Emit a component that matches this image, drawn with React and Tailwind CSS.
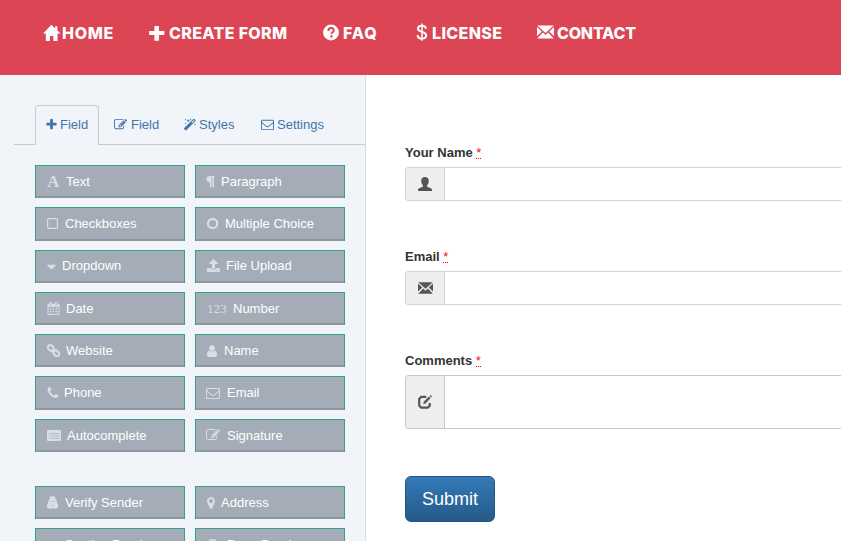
import React from "react";
import { FaUpload, FaCaretDown } from "react-icons/fa";

const PATHS = {
  edit: "M888 1184l116-116-152-152-116 116v56h96v96h56zm440-720q-16-16-33 1l-350 350q-17 17-1 33t33-1l350-350q17-17 1-33zm80 594v190q0 119-84.5 203.5t-203.5 84.5h-832q-119 0-203.5-84.5t-84.5-203.5v-832q0-119 84.5-203.5t203.5-84.5h832q63 0 117 25 15 7 18 23 3 17-9 29l-49 49q-14 14-32 8-23-6-45-6h-832q-66 0-113 47t-47 113v832q0 66 47 113t113 47h832q66 0 113-47t47-113v-126q0-13 9-22l64-64q15-15 35-7t20 29zm-96-738l288 288-672 672h-288v-288zm444 132l-92 92-288-288 92-92q28-28 68-28t68 28l152 152q28 28 28 68t-28 68z",
  plus: "M1600 736v192q0 40-28 68t-68 28h-416v416q0 40-28 68t-68 28h-192q-40 0-68-28t-28-68v-416h-416q-40 0-68-28t-28-68v-192q0-40 28-68t68-28h416v-416q0-40 28-68t68-28h192q40 0 68 28t28 68v416h416q40 0 68 28t28 68z",
  user: "M1536 1399q0 109-62.5 187t-150.5 78h-854q-88 0-150.5-78t-62.5-187q0-85 8.5-160.5t31.5-152 58.5-131 94-89 134.5-34.5q131 128 313 128t313-128q76 0 134.5 34.5t94 89 58.5 131 31.5 152 8.5 160.5zm-256-887q0 159-112.5 271.5t-271.5 112.5-271.5-112.5-112.5-271.5 112.5-271.5 271.5-112.5 271.5 112.5 112.5 271.5z",
  calendar: "M192 1664h288v-288h-288v288zm352 0h320v-288h-320v288zm-352-352h288v-320h-288v320zm352 0h320v-320h-320v320zm-352-384h288v-288h-288v288zm736 736h320v-288h-320v288zm-384-736h320v-288h-320v288zm768 736h288v-288h-288v288zm-384-352h320v-320h-320v320zm-352-864v-288q0-13-9.5-22.5t-22.5-9.5h-64q-13 0-22.5 9.5t-9.5 22.5v288q0 13 9.5 22.5t22.5 9.5h64q13 0 22.5-9.5t9.5-22.5zm736 864h288v-320h-288v320zm-384-384h320v-288h-320v288zm384 0h288v-288h-288v288zm32-480v-288q0-13-9.5-22.5t-22.5-9.5h-64q-13 0-22.5 9.5t-9.5 22.5v288q0 13 9.5 22.5t22.5 9.5h64q13 0 22.5-9.5t9.5-22.5zm384-64v1280q0 52-38 90t-90 38h-1408q-52 0-90-38t-38-90v-1280q0-52 38-90t90-38h128v-96q0-66 47-113t113-47h64q66 0 113 47t47 113v96h384v-96q0-66 47-113t113-47h64q66 0 113 47t47 113v96h128q52 0 90 38t38 90z",
  envelope: "M1664 1504v-768q-32 36-69 66-268 206-426 338-51 43-83 67t-86.5 48.5-102.5 24.5h-2q-48 0-102.5-24.5t-86.5-48.5-83-67q-158-132-426-338-37-30-69-66v768q0 13 9.5 22.5t22.5 9.5h1472q13 0 22.5-9.5t9.5-22.5zm0-1051v-24.5l-.5-13-3-12.5-5.5-9-9-7.5-14-2.5h-1472q-13 0-22.5 9.5t-9.5 22.5q0 168 147 284 193 152 401 317 6 5 35 29.5t46 37.5 44.5 31.5 50.5 27.5 43 9h2q20 0 43-9t50.5-27.5 44.5-31.5 46-37.5 35-29.5q208-165 401-317 54-43 100.5-115.5t46.5-131.5zm128-37v1088q0 66-47 113t-113 47h-1472q-66 0-113-47t-47-113v-1088q0-66 47-113t113-47h1472q66 0 113 47t47 113z",
  marker: "M1152 640q0-106-75-181t-181-75-181 75-75 181 75 181 181 75 181-75 75-181zm256 0q0 109-33 179l-364 774q-16 33-47.5 52t-67.5 19-67.5-19-46.5-52l-365-774q-33-70-33-179 0-212 150-362t362-150 362 150 150 362z",
  phone: "M1600 1240q0 27-10 70.5t-21 68.5q-21 50-122 106-94 51-186 51-27 0-53-3.5t-57.5-12.5-47-14.5-55.5-20.5-49-18q-98-35-175-83-127-79-264-216t-216-264q-48-77-83-175-3-9-18-49t-20.5-55.5-14.5-47-12.5-57.5-3.5-53q0-92 51-186 56-101 106-122 25-11 68.5-21t70.5-10q14 0 21 3 18 6 53 76 11 19 30 54t35 63.5 31 53.5q3 4 17.5 25t21.5 35.5 7 28.5q0 20-28.5 50t-62 55-62 53-28.5 46q0 9 5 22.5t8.5 20.5 14 24 11.5 19q76 137 174 235t235 174q2 1 19 11.5t24 14 20.5 8.5 22.5 5q18 0 46-28.5t53-62 55-62 50-28.5q14 0 28.5 7t35.5 21.5 25 17.5q25 15 53.5 31t63.5 35 54 30q70 35 76 53 3 7 3 21z",
};

const Fa = ({ name, className = "size-[13px]" }) => (
  <svg viewBox="0 0 1792 1792" fill="currentColor" className={className}>
    <path d={PATHS[name]} />
  </svg>
);

const Wand = () => (
  <svg viewBox="0 0 13 13" className="-ml-px mr-[3px] size-[13px]" fill="currentColor">
    <path fillRule="evenodd" d="M10.300 1q.5-.5 1 0l1.100 1.100q.5.500 0 1L3.300 12.200q-.5.500-1 0l-1.100-1.100q-.5-.5 0-1zM10.700 2.100L8.500 4.300l.7.700 2.200-2.200z" />
    <path d="M2.600.6l.3.800.8.300-.8.300-.3.800-.3-.8-.8-.3.800-.3zM5.300 1l.5 1.300 1.300.5-1.300.500-.5 1.300-.5-1.300-1.300-.5 1.300-.5zM7.800.2l.3.800.8.300-.8.300-.3.800-.3-.8-.8-.3.800-.3zM12 5.400l.3.800.8.300-.8.300-.3.800-.3-.8-.8-.3.800-.3zM2.600 4.400l.3.800.8.300-.8.300-.3.800-.3-.8-.8-.3.800-.3z" />
  </svg>
);
const Square = () => (
  <svg viewBox="0 0 13 13" className="size-[13px]" fill="none" stroke="currentColor" strokeWidth="1.2">
    <rect x="0.6" y="1.6" width="9.8" height="9.8" rx="1.4" />
  </svg>
);
const Circle = () => (
  <svg viewBox="0 0 13 13" className="size-[13px]" fill="none" stroke="currentColor" strokeWidth="2.200">
    <circle cx="5.6" cy="6.5" r="4.7" />
  </svg>
);
const Chain = () => (
  <svg viewBox="0 0 13 13" className="size-[13px]" fill="none" stroke="currentColor" strokeWidth="2.100">
    <rect x="0.700" y="1.600" width="6.200" height="4.700" rx="2.300" transform="rotate(45 3.800 3.900)" />
    <rect x="6.200" y="6.900" width="6.200" height="4.700" rx="2.300" transform="rotate(45 9.300 9.200)" />
    <path d="M5 5.200l3 3" />
  </svg>
);
const Card = () => (
  <svg viewBox="0 0 14 13" className="h-[13px] w-[14px]" fill="currentColor">
    <path fillRule="evenodd" d="M1 1h12q1 0 1 1v9q0 1-1 1H1q-1 0-1-1V2q0-1 1-1zM1.600 4.300v.800h1.200v-.8zm2.200 0v.8h8.600v-.8zM1.600 6.500v.8h1.200v-.8zm2.200 0v.8h8.600v-.8zM1.600 8.700v.8h1.200v-.8zm2.200 0v.8h8.600v-.8z" />
  </svg>
);
const Secret = () => (
  <svg viewBox="0 0 12 13" className="h-[13px] w-[12px]" fill="currentColor">
    <path fillRule="evenodd" d="M2.900 1Q3.300.2 4.200.3l1.300.3L6.800.3Q7.700.2 8.100 1l.6 2.400 1.300.6-.4.600.2 2Q11.100 7.400 11.100 10.200q0 2.400-1.600 2.400H1.600Q0 12.600 0 10.200 0 7.400 1.400 6.600l.1-2L1.100 4l1.300-.6zM3.300 5.300v.7h1.600v-.7zm2.800 0v.7h1.600v-.7zM5 8.400l.2 2.200h.6L6 8.400z" />
  </svg>
);
const Pilcrow = () => (
  <svg viewBox="0 0 9 13" className="-ml-px h-[13px] w-[9px]" fill="currentColor">
    <path d="M3.700 1H8.600v1.100H7.900v10.200H6.300V2.100H5.500v10.200H3.900V7.400Q.5 7 .5 4.200.5 1 3.700 1z" />
  </svg>
);
const Copy = () => (
  <svg viewBox="0 0 13 13" className="size-[13px]" fill="none" stroke="currentColor" strokeWidth="1.300">
    <path d="M1 3.500L3.500 1H8v3M1 3.500V9h4M3.500 1v2.500H1M5 6.500L7.500 4H12v8H5zM7.500 4v2.500H5" />
  </svg>
);

const Home = () => (
  <svg viewBox="0 0 18 18" className="-mt-px size-[18px]" fill="white">
    <path d="M8.500 .8L0 9.400h2.800V17h4.100v-5h3.400v5h4.200V9.400H17.500L14.300 6.200V2.200h-2.200v2.200z" />
  </svg>
);
const NavPlus = () => (
  <svg viewBox="0 0 16 18" className="-mt-px h-[18px] w-4" fill="white">
    <path d="M5.800 2h3.800q.4 0 .4.400v4.500h4.900q.5 0 .5.400v3.300q0 .4-.5.400H10v5.300q0 .5-.4.500H5.800q-.4 0-.4-.5V11H.6q-.5 0-.5-.4V7.300q0-.4.5-.4h4.800V2.400q0-.4.4-.4z" />
  </svg>
);
const Question = () => (
  <svg viewBox="0 0 16 18" className="h-[18px] w-4">
    <circle cx="8" cy="8.500" r="7.900" fill="white" />
    <path d="M5.300 6.900C5.300 4.800 6.400 4 8 4s2.800 1 2.800 2.400c0 1.900-2.300 1.900-2.300 3.600" fill="none" stroke="#dc4553" strokeWidth="1.900" />
    <rect x="7.300" y="11.300" width="2.300" height="2.200" fill="#dc4553" />
  </svg>
);
const Dollar = () => (
  <svg viewBox="0 0 12 20" className="h-5 w-3" fill="none" stroke="white">
    <path d="M10 5.600C9.700 3.900 8.300 2.800 6 2.800S2 3.900 2 5.700c0 4 8.200 2.300 8.200 6.600 0 2-1.700 3.300-4.200 3.300s-4.300-1.400-4.400-3.500" strokeWidth="2" />
    <path d="M6 .6v17.200" strokeWidth="1.500" />
  </svg>
);
const GlyphMail = ({ className }) => (
  <svg viewBox="0 0 18 14" className={className} fill="currentColor">
    <path d="M.3 0H17.700L9 8zM0 1.700L5.100 6.500 0 11.300zM18 1.700v9.600L12.900 6.500zM6.200 7.600L9 10.200l2.800-2.600L17.800 14H.2z" />
  </svg>
);
const GlyphUser = () => (
  <svg viewBox="0 0 14 14" className="size-[14px]" fill="currentColor">
    <path d="M7 0C9.300 0 10.800 1.300 10.800 3.800c0 2.100-.8 3.500-1.700 4.500v.9c0 .5.300.7.800.9l2.900 1.200q1.200.5 1.200 1.400V14H0v-1.300q0-.9 1.200-1.400l2.900-1.200c.5-.2.800-.4.800-.9v-.9C4 7.300 3.200 5.900 3.200 3.800 3.200 1.300 4.700 0 7 0z" />
  </svg>
);
const GlyphEdit = () => (
  <svg viewBox="0 0 14 14" className="size-[14px]">
    <path d="M8.300 1.900H3.200L1.200 3.900v6.700l2 2h6.600l1.900-1.900V8" fill="none" stroke="currentColor" strokeWidth="2.200" />
    <path d="M5.200 9.300l.7-2.700L11 1.500l1.600 1.600L7.800 8.200z" fill="currentColor" />
    <path d="M11.600.8l.8-.7L14 1.600l-.8.800z" fill="currentColor" />
  </svg>
);

const NAV = [
  { label: "HOME", icon: <Home />, item: "w-[106px]", box: "w-[19px]", track: "tracking-[0.700px]" },
  { label: "CREATE FORM", icon: <NavPlus />, item: "w-[174px]", box: "w-[20px]", track: "tracking-[0.350px]" },
  { label: "FAQ", icon: <Question />, item: "w-[93px]", box: "w-[20px]", track: "tracking-[0.900px]" },
  { label: "LICENSE", icon: <Dollar />, item: "w-[121px]", box: "w-[16px]", track: "tracking-[0.350px]" },
  { label: "CONTACT", icon: <GlyphMail className="-mt-0.5 h-[14px] w-[17px]" />, item: "w-[110px]", box: "w-[20px]", track: "tracking-[-0.200px]" },
];

const GROUP_A = [
  ["Text", <span className="font-['Liberation_Serif',serif] text-[17px] leading-none font-bold">A</span>, "w-[19px]"],
  ["Paragraph", <Pilcrow />, "w-[14px]"],
  ["Checkboxes", <Square />, "w-[18px]"],
  ["Multiple Choice", <Circle />, "w-[18px]"],
  ["Dropdown", <FaCaretDown className="h-[15px] w-[9px]" />, "w-[15px]"],
  ["File Upload", <FaUpload className="-mt-px size-[13px]" />, "w-[19px]"],
  ["Date", <Fa name="calendar" />, "w-[19px]"],
  ["Number", <span className="font-['Liberation_Serif',serif] text-[13px] leading-none">123</span>, "w-[26px]"],
  ["Website", <Chain />, "w-[19px]"],
  ["Name", <Fa name="user" className="-ml-[2px] size-[14px]" />, "w-[17px]"],
  ["Phone", <Fa name="phone" className="-ml-px size-[14px]" />, "w-[17px]"],
  ["Email", <Fa name="envelope" className="-ml-px size-[14px]" />, "w-[20px]"],
  ["Autocomplete", <Card />, "w-[20px]"],
  ["Signature", <Fa name="edit" className="-ml-px size-[14px]" />, "w-[20px]"],
];
const GROUP_B = [
  ["Verify Sender", <Secret />, "w-[18px]"],
  ["Address", <Fa name="marker" className="-ml-[3px] size-[14px]" />, "w-[14px]"],
  ["Section Break", null, "w-[18px]"],
  ["Page Break", <Copy />, "w-[20px]"],
];

const FieldGrid = ({ items }) => (
  <div className="grid grid-cols-[150px_150px] gap-x-[10px] gap-y-[9px]">
    {items.map(([label, icon, box]) => (
      <button
        key={label}
        className="flex h-[33.3px] items-center border border-b-0 border-[#34a287] bg-[#a4adb7] pb-px pl-[11px] text-left text-[13px] text-white shadow-[inset_0_-2px_0_#90969f]"
      >
        <span className={"flex shrink-0 items-center text-[#d6dfe5] " + box}>{icon}</span>
        <span className="whitespace-nowrap">{label}</span>
      </button>
    ))}
  </div>
);

const FormField = ({ label, icon, height, border }) => (
  <div>
    <label className="block h-[23px] text-[13px] leading-[18px] font-bold text-[#333]">
      {label}{" "}
      <span className="inline-block h-[15px] border-b border-dotted border-[#e00] align-top font-normal text-[#e11]">*</span>
    </label>
    <div className={"flex overflow-hidden rounded-l-[4px] border border-r-0 " + border + " " + height}>
      <span className={"flex w-[39px] shrink-0 items-center justify-center border-r bg-[#eee] text-[#555] " + border}>{icon}</span>
      <div className="flex-1 bg-white" />
    </div>
  </div>
);

export default function App() {
  return (
    <div className="flex h-[541px] w-[841px] flex-col overflow-hidden bg-white font-['Liberation_Sans',Arial,sans-serif]">
      <header className="h-[75px] shrink-0 bg-[#dc4553] pt-[23px] pl-[43px]">
        <nav className="flex h-5 items-center font-['Inter',sans-serif] text-[16px] font-extrabold text-white">
          {NAV.map((n) => (
            <a key={n.label} className={"flex shrink-0 items-center whitespace-nowrap " + n.item}>
              <span className={"flex h-5 shrink-0 items-center " + n.box}>{n.icon}</span>
              <span className={n.track}>{n.label}</span>
            </a>
          ))}
        </nav>
      </header>
      <div className="flex min-h-0 flex-1">
        <aside className="w-[366px] shrink-0 overflow-hidden border-r border-[#d8dde0] bg-[#f1f4f8] pt-[30px]">
          <div className="ml-[14px] flex h-10 border-b border-[#c5cbd0] pl-[21px] text-[13px] text-[#3e76ab]">
            <a className="flex h-10 w-16 items-center rounded-t-[4px] border border-b-0 border-[#c5cbd0] bg-[#f1f4f8] pb-[2px] pl-[9px]">
              <Fa name="plus" className="mr-[2px] size-[13px]" />Field
            </a>
            <a className="flex w-[70px] items-center pl-[15px]">
              <Fa name="edit" className="mr-[4px] size-[13px]" />Field
            </a>
            <a className="flex w-[77px] items-center pl-[15px]">
              <Wand />Styles
            </a>
            <a className="flex items-center pl-[15px]">
              <Fa name="envelope" className="mr-[3px] size-[13px]" />Settings
            </a>
          </div>
          <div className="pt-5 pl-[35px]">
            <FieldGrid items={GROUP_A} />
            <div className="h-[34px]" />
            <FieldGrid items={GROUP_B} />
          </div>
        </aside>
        <main className="flex-1 pt-[69px] pl-[39px]">
          <FormField label="Your Name" icon={<GlyphUser />} height="h-[34px]" border="border-[#d3d3d3]" />
          <div className="h-[47px]" />
          <FormField label="Email" icon={<GlyphMail className="h-[12px] w-[15px]" />} height="h-[34px]" border="border-[#d3d3d3]" />
          <div className="h-[47px]" />
          <FormField label="Comments" icon={<GlyphEdit />} height="h-[54px]" border="border-[#c9c9c9]" />
          <button className="mt-[47px] flex h-[46px] w-[90px] items-center justify-center rounded-[6px] border border-[#245580] bg-linear-to-b from-[#337ab7] to-[#265a88] text-[18px] text-white">
            Submit
          </button>
        </main>
      </div>
    </div>
  );
}
